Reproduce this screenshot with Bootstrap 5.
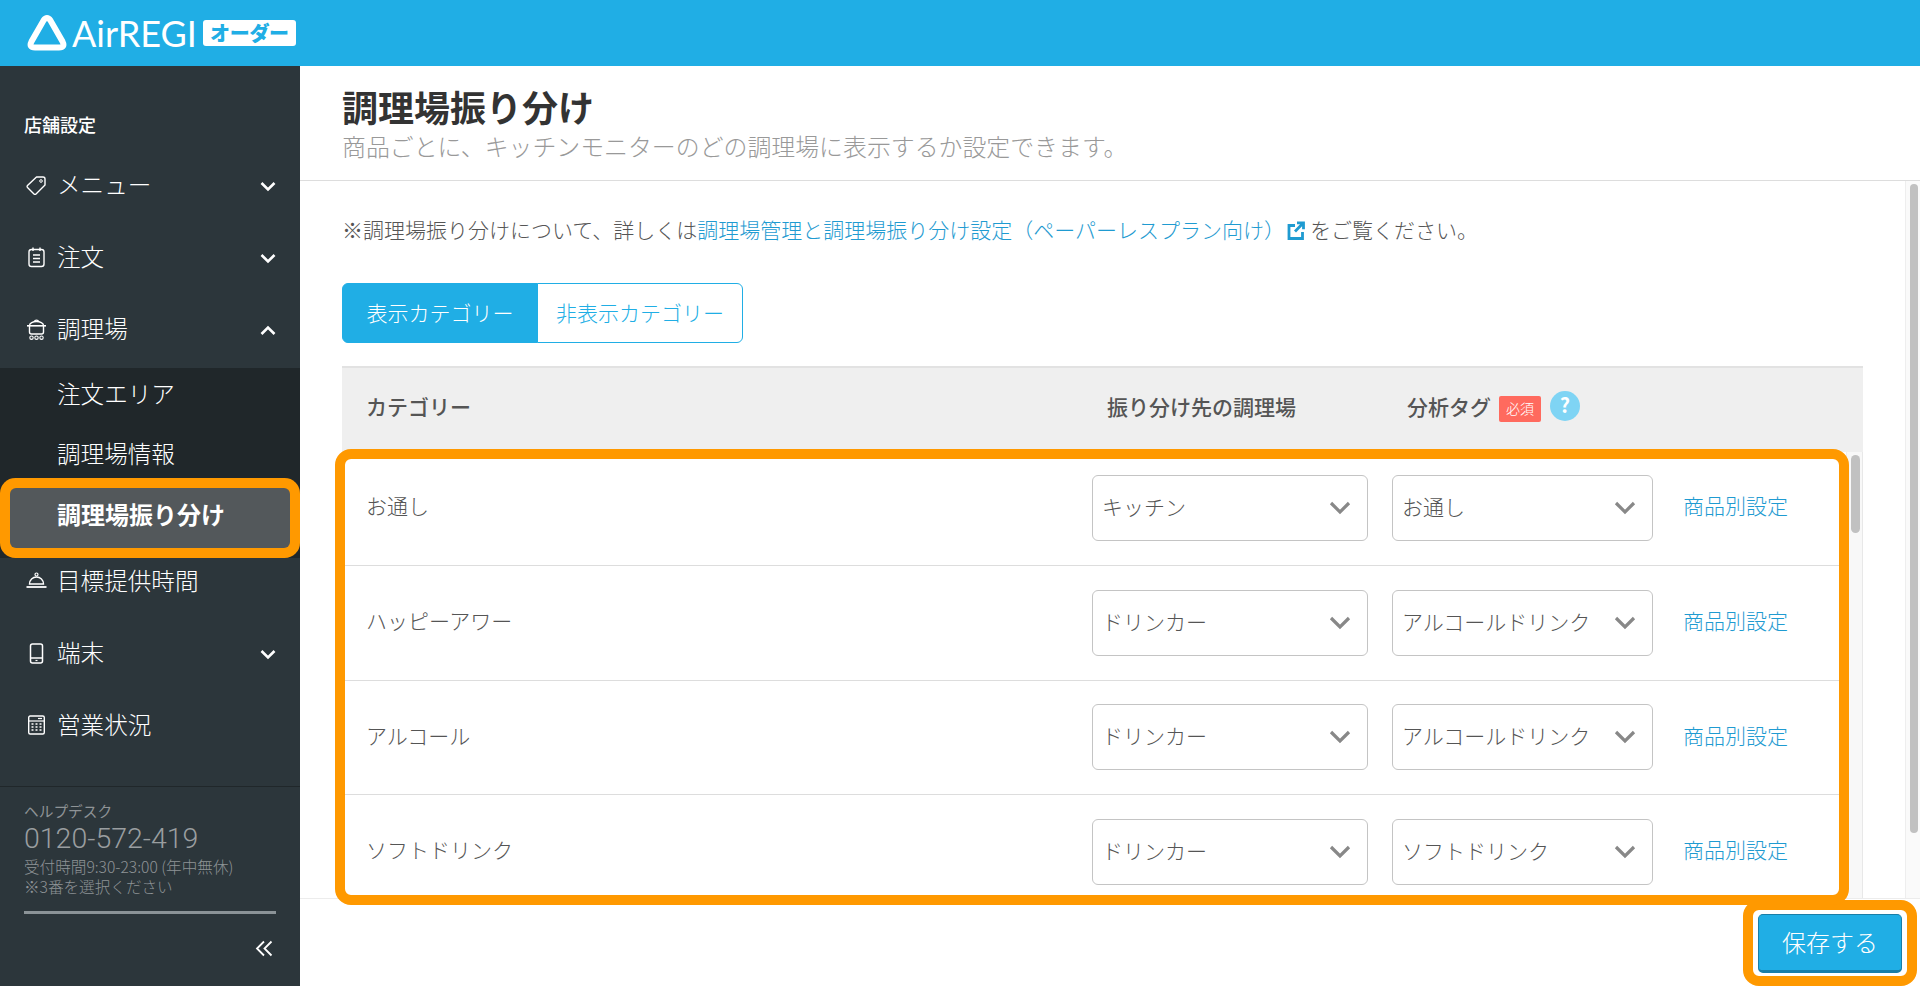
<!DOCTYPE html>
<html lang="ja">
<head>
<meta charset="utf-8">
<title>調理場振り分け</title>
<link href="https://cdn.jsdelivr.net/npm/bootstrap@5.3.0/dist/css/bootstrap.min.css" rel="stylesheet">
<style>
html,body{height:100%;margin:0;overflow:hidden}
body{font-family:"Noto Sans CJK JP","Liberation Sans",sans-serif;color:#555;font-size:21px;background:#fff}
.topbar{height:66px;background:#20aee5;padding-left:27px;gap:5px}
.logo-word{font-family:Lato,"Liberation Sans",sans-serif;font-size:36px;font-weight:400;color:#fff;line-height:1}
.logo-tag{background:#fff;color:#20aee5;font-weight:900;font-size:20px;line-height:26px;height:26px;width:93px;text-align:center;border-radius:3px;margin-left:1px;letter-spacing:-.3px}
.appbody{height:920px}
.side{width:300px;background:#2c363b;color:#fff;flex:none}
.side-h{font-size:18px;font-weight:500;padding:46px 0 0 24px;height:84px;line-height:24px}
.navi{height:72px;padding:0 24px 0 26px;color:#fff;font-size:23.6px;font-weight:300;gap:10px}
.navi svg.ic{width:21px;height:22px;flex:none;overflow:visible}
.navi .lab{flex:1;padding-bottom:3px}
.navi.open{height:74px;padding-bottom:2px}
.navi.plain{height:60px;padding-bottom:12px}
.sublist{background:#20272a}
.subi{height:60px;padding:0 0 4px 57px;color:#fff;font-size:23.6px;font-weight:300;display:flex;align-items:center}
.subi:first-child{height:58px;padding-bottom:7px}
.subi.cur{background:#53585b;font-weight:700;font-size:24px;height:60px;margin:2px 10px 10px;padding:0 0 8px 47px;border-radius:6px;box-shadow:0 0 0 10px #ff9900;position:relative}
.side-foot{margin-top:auto;border-top:1px solid #20272a;padding:13px 24px 0;height:200px;color:#8e9396}
.f-l{font-size:14.7px;line-height:22px}
.f-p{font-family:Roboto,sans-serif;font-weight:300;font-size:28.5px;line-height:34px;color:#9a9ea0}
.f-s{font-size:15.6px;line-height:20px;font-weight:300}
.f-bar{height:3px;background:#8b9397;margin-top:15px}
.f-back{margin-top:21px;text-align:right;padding-right:3px;line-height:1}
.maincol{min-width:0}
.pagehead{height:115px;border-bottom:1px solid #ddd;padding:16px 0 0 42px}
.pg-t{font-size:36px;font-weight:700;color:#333;line-height:48px;margin:0}
.pg-s{font-size:23.9px;color:#999;font-weight:300;line-height:32px;margin:0}
.mainbody{height:717px}
.content{padding:0 42px 0 42px;min-width:0}
.note{font-size:21px;font-weight:300;line-height:30px;margin:33px 0 0;color:#555}
.note a,.rowlink{color:#1f9bd1;text-decoration:none}
.ext{width:18px;height:19px;margin:0 5px 0 2px;vertical-align:-2px}
.tabs{margin-top:39px;height:60px}
.tabbtn{font-size:21px;font-weight:300;border:1px solid #20aee5;color:#20aee5;background:#fff;height:60px;padding:0 0 2px;line-height:1;--bs-btn-border-radius:6px}
.tabbtn.on{background:#20aee5;color:#fff;width:196px}
.tabbtn.off{width:206px}
.tbl-h{height:86px;background:#efefef;border-top:2px solid #e2e2e2;margin-top:23px;font-size:21px;font-weight:500}
.th1{flex:1;padding:0 0 6px 24px}
.th2{width:300px;padding-bottom:6px}
.th3{width:456px;gap:8px}
.th3-t{padding-bottom:6px}
.req{background:#ff6a5e;color:#fff;font-size:14px;font-weight:300;width:42px;height:26px;line-height:24px;text-align:center;border-radius:2px;margin-top:-3px}
.qm{background:#7fd4f4;color:#fff;font-weight:700;font-size:20px;width:30px;height:30px;border-radius:50%;line-height:28px;text-align:center;margin:0 0 8px 1px}
.pane{position:relative;height:446px}
.rowsclip{overflow:hidden}
.rw{height:114.67px;border-bottom:1px solid #ddd;padding-left:24px;font-weight:300}
.rw:first-child{height:114px;padding-bottom:1px}
.rw-n{flex:1;padding-bottom:4px}
.sel.form-select{width:276px;height:66px;flex:none;font-size:21px;font-weight:300;color:#555;padding:0 9px 3px;border:1px solid #c4c4c4;border-radius:6px;background-size:22px 14px;background-position:right 16px center;box-shadow:none;--bs-form-select-bg-img:none;background-image:url("data:image/svg+xml,%3Csvg xmlns='http://www.w3.org/2000/svg' viewBox='0 0 22 14'%3E%3Cpath d='M2 2l9 9 9-9' fill='none' stroke='%23888' stroke-width='3.2'/%3E%3C/svg%3E")}
.sel.sel2{width:261px;margin-left:24px}
.rowlink{width:193px;padding:0 0 4px 30px;font-size:21px;font-weight:300;flex:none}
.tr-in{width:17px;flex:none;background:#f8f8f8;border-left:1px solid #eee;border-right:1px solid #e8e8e8}
.th-in{width:9px;height:78px;margin:3px 0 0 4px;background:#c1c1c1;border-radius:5px}
.frame{position:absolute;top:-3px;left:-7px;right:14px;bottom:-7px;border:10px solid #ff9900;border-radius:16px;z-index:5;pointer-events:none}
.tr-out{width:15px;flex:none;background:#fafafa;border-left:1px solid #eee;height:717px}
.th-out{width:8px;height:649px;margin:3px 0 0 4px;background:#c1c1c1;border-radius:4px}
.footbar{height:88px;border-top:1px solid #ececec;padding:1px 3px 0 0;background:#fff}
.saveframe{border:10px solid #ff9900;border-radius:16px;padding:4px 5px 3px;width:174px;height:86px}
.savebtn{width:144px;height:59px;background:#20aee5;color:#fff;font-size:24px;font-weight:300;border:1px solid #1a7ea8;border-bottom-width:3px;border-radius:5px;padding:0 0 2px;line-height:1}
.savebtn:hover{background:#20aee5;color:#fff}
</style>
</head>
<body>
<header class="topbar d-flex align-items-center">
  <svg width="40" height="36" viewBox="0 0 40 36"><path d="M16.500 5.500Q20 .5 23.500 5.500L35.500 26.500Q38.500 32.500 32 32.500H8Q1.500 32.500 4.500 26.500Z" fill="none" stroke="#fff" stroke-width="6"/></svg>
  <span class="logo-word">AirREGI</span>
  <span class="logo-tag">オーダー</span>
</header>
<div class="appbody d-flex">
  <aside class="side d-flex flex-column">
    <div class="side-h">店舗設定</div>
    <div class="navi d-flex align-items-center">
      <svg class="ic" viewBox="0 0 21 22"><path d="M10.500 2h6.500a2 2 0 0 1 2 2v6L10 19a1.400 1.400 0 0 1-2 0L1.500 12.500a1.400 1.400 0 0 1 0-2z" fill="none" stroke="#fff" stroke-width="1.4" stroke-linejoin="round"/><circle cx="15" cy="6" r="1.3" fill="none" stroke="#fff"/></svg>
      <span class="lab">メニュー</span>
      <svg width="16" height="11" viewBox="0 0 16 11"><path d="M1.500 2l6.500 6.500L14.500 2" fill="none" stroke="#fff" stroke-width="2.6"/></svg>
    </div>
    <div class="navi d-flex align-items-center">
      <svg class="ic" viewBox="0 0 21 22"><rect x="3" y="2.500" width="15" height="17" rx="2.500" fill="none" stroke="#fff" stroke-width="1.4"/><path d="M7 .5v3.500M14 .5v3.500" stroke="#fff" stroke-width="1.4"/><path d="M7 8h7M7 11.500h7M7 15h7" stroke="#fff" stroke-width="1.4"/></svg>
      <span class="lab">注文</span>
      <svg width="16" height="11" viewBox="0 0 16 11"><path d="M1.500 2l6.500 6.500L14.500 2" fill="none" stroke="#fff" stroke-width="2.6"/></svg>
    </div>
    <div class="navi open d-flex align-items-center">
      <svg class="ic" viewBox="0 0 21 22"><path d="M8.500 2.500a2 1.300 0 0 1 4 0" fill="none" stroke="#fff" stroke-width="1.2"/><path d="M3.500 6.500C3.500 4 7 2.500 10.500 2.500S17.500 4 17.500 6.500" fill="none" stroke="#fff" stroke-width="1.4"/><path d="M1 6.800h19" stroke="#fff" stroke-width="1.6"/><path d="M3.500 7v6a2 2 0 0 0 2 2h10a2 2 0 0 0 2-2V7" fill="none" stroke="#fff" stroke-width="1.4"/><circle cx="5.500" cy="18.700" r="1.700" fill="none" stroke="#fff" stroke-width="1.100"/><circle cx="10.500" cy="18.700" r="1.700" fill="none" stroke="#fff" stroke-width="1.100"/><circle cx="15.500" cy="18.700" r="1.700" fill="none" stroke="#fff" stroke-width="1.100"/></svg>
      <span class="lab">調理場</span>
      <svg width="16" height="11" viewBox="0 0 16 11"><path d="M1.500 9L8 2.500 14.500 9" fill="none" stroke="#fff" stroke-width="2.6"/></svg>
    </div>
    <div class="sublist">
      <div class="subi">注文エリア</div>
      <div class="subi">調理場情報</div>
      <div class="subi cur">調理場振り分け</div>
    </div>
    <div class="navi plain d-flex align-items-center">
      <svg class="ic" viewBox="0 0 21 22"><path d="M3.500 13a7 7 0 0 1 14 0z" fill="none" stroke="#fff" stroke-width="1.4"/><circle cx="10.500" cy="3.500" r="1.500" fill="none" stroke="#fff" stroke-width="1.200"/><path d="M.5 16h20" stroke="#fff" stroke-width="1.800"/></svg>
      <span class="lab">目標提供時間</span>
    </div>
    <div class="navi d-flex align-items-center">
      <svg class="ic" viewBox="0 0 21 22"><rect x="4.500" y="1" width="12" height="19" rx="2" fill="none" stroke="#fff" stroke-width="1.500"/><path d="M4.500 15h12" stroke="#fff" stroke-width="1.500"/><path d="M9.500 17.500h2" stroke="#fff" stroke-width="1.200"/></svg>
      <span class="lab">端末</span>
      <svg width="16" height="11" viewBox="0 0 16 11"><path d="M1.500 2l6.500 6.500L14.500 2" fill="none" stroke="#fff" stroke-width="2.6"/></svg>
    </div>
    <div class="navi d-flex align-items-center">
      <svg class="ic" viewBox="0 0 21 22"><rect x="2.700" y="1" width="15.600" height="18" rx="1.500" fill="none" stroke="#fff" stroke-width="1.4"/><path d="M2.500 6h16" stroke="#fff" stroke-width="1.200"/><path d="M12 3.500h4" stroke="#fff" stroke-width="1.200"/><path d="M5.500 9h2M9.500 9h2M13.500 9h2M5.500 12h2M9.500 12h2M13.500 12h2M5.500 15h2M9.500 15h2M13.500 15h2" stroke="#fff" stroke-width="1.700"/></svg>
      <span class="lab">営業状況</span>
    </div>
    <div class="side-foot">
      <div class="f-l">ヘルプデスク</div>
      <div class="f-p">0120-572-419</div>
      <div class="f-s">受付時間9:30-23:00 (年中無休)</div>
      <div class="f-s">※3番を選択ください</div>
      <div class="f-bar"></div>
      <div class="f-back"><svg width="18" height="17" viewBox="0 0 18 17"><path d="M9 1.500L2 8.500l7 7M16.500 1.500l-7 7 7 7" fill="none" stroke="#fff" stroke-width="1.800"/></svg></div>
    </div>
  </aside>
  <main class="maincol flex-grow-1 d-flex flex-column">
    <div class="pagehead">
      <h1 class="pg-t">調理場振り分け</h1>
      <p class="pg-s">商品ごとに、キッチンモニターのどの調理場に表示するか設定できます。</p>
    </div>
    <div class="mainbody d-flex">
      <div class="content flex-grow-1">
        <p class="note">※調理場振り分けについて、詳しくは<a href="#">調理場管理と調理場振り分け設定（ペーパーレスプラン向け）<svg class="ext" viewBox="0 0 18 19"><path d="M8 4.500H2v13h13.500V11" fill="none" stroke="#1f9bd1" stroke-width="2.800"/><path d="M10 1.800h6.500v6.500M16 2.300L8 10.500" fill="none" stroke="#1f9bd1" stroke-width="2.800"/></svg></a>をご覧ください。</p>
        <div class="btn-group tabs d-inline-flex" role="group">
          <button class="btn tabbtn on" type="button">表示カテゴリー</button>
          <button class="btn tabbtn off" type="button">非表示カテゴリー</button>
        </div>
        <div class="tbl-h d-flex align-items-center">
          <div class="th1">カテゴリー</div>
          <div class="th2">振り分け先の調理場</div>
          <div class="th3 d-flex align-items-center"><span class="th3-t">分析タグ</span><span class="req">必須</span><span class="qm">?</span></div>
        </div>
        <div class="pane d-flex">
          <div class="rowsclip flex-grow-1">
            <div class="rw d-flex align-items-center"><span class="rw-n">お通し</span><select class="form-select sel"><option>キッチン</option></select><select class="form-select sel sel2"><option>お通し</option></select><a class="rowlink" href="#">商品別設定</a></div>
            <div class="rw d-flex align-items-center"><span class="rw-n">ハッピーアワー</span><select class="form-select sel"><option>ドリンカー</option></select><select class="form-select sel sel2"><option>アルコールドリンク</option></select><a class="rowlink" href="#">商品別設定</a></div>
            <div class="rw d-flex align-items-center"><span class="rw-n">アルコール</span><select class="form-select sel"><option>ドリンカー</option></select><select class="form-select sel sel2"><option>アルコールドリンク</option></select><a class="rowlink" href="#">商品別設定</a></div>
            <div class="rw d-flex align-items-center"><span class="rw-n">ソフトドリンク</span><select class="form-select sel"><option>ドリンカー</option></select><select class="form-select sel sel2"><option>ソフトドリンク</option></select><a class="rowlink" href="#">商品別設定</a></div>
          </div>
          <div class="tr-in"><div class="th-in"></div></div>
          <div class="frame"></div>
        </div>
      </div>
      <div class="tr-out"><div class="th-out"></div></div>
    </div>
    <div class="footbar d-flex justify-content-end">
      <div class="saveframe"><button class="btn savebtn" type="button">保存する</button></div>
    </div>
  </main>
</div>
<script src="https://cdn.jsdelivr.net/npm/bootstrap@5.3.0/dist/js/bootstrap.bundle.min.js"></script>
</body>
</html>
